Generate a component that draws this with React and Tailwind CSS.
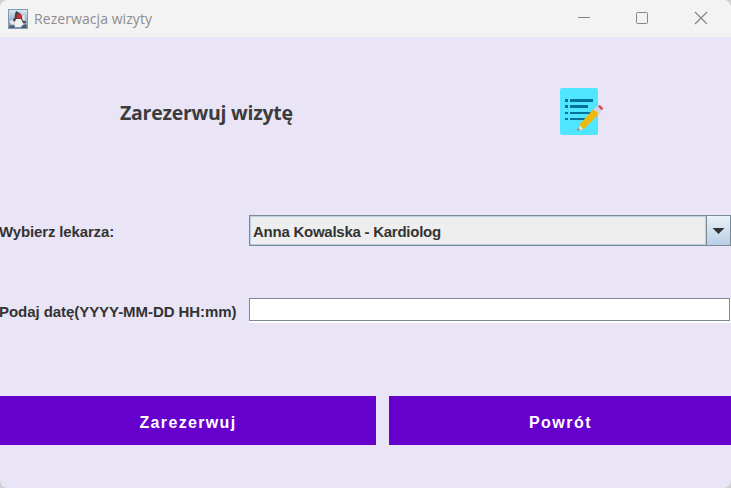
function JavaIcon() {
  return (
    <svg width="20" height="20" viewBox="0 0 20 20" className="shrink-0">
      <defs>
        <linearGradient id="sky" x1="0" y1="0" x2="0" y2="1">
          <stop offset="0" stopColor="#dce8f2" />
          <stop offset="1" stopColor="#7390b0" />
        </linearGradient>
      </defs>
      <rect x="0.5" y="0.5" width="19" height="19" fill="url(#sky)" stroke="#7f9ab5" />
      <path d="M8 2L10 3L13 5L14.5 9L17.5 12L18 14L13 14L8 13L5 15L2 14L6.5 9L7 5Z" fill="#3f4248" />
      <path d="M8 10L13 10L15 14L16 17L12 18L7 18L6 15Z" fill="#f2f2f2" />
      <path d="M1.5 12L4.5 11L7 13L6 15.5L3 15.5ZM14 8L16 6.5L17 10L16.5 12.5L14.5 11Z" fill="#e4e6e9" />
      <path d="M1.5 16.5H7L6 19H1.5ZM14.5 16L18.5 15.5V19H13Z" fill="#4f5a68" />
      <circle cx="11" cy="7.3" r="2.5" fill="#d8262a" />
    </svg>
  );
}

function NoteIcon() {
  return (
    <svg width="46" height="50" viewBox="0 0 46 50" className="mb-[2px]">
      <rect x="0" y="1" width="38" height="47" rx="2" fill="#50e6ff" />
      <g fill="#00739c">
        <rect x="5" y="12" width="3" height="3" />
        <rect x="10" y="12" width="23" height="3" />
        <rect x="5" y="18" width="3" height="3" />
        <rect x="10" y="18" width="18" height="3" />
        <rect x="5" y="25" width="3" height="2" />
        <rect x="10" y="25" width="22" height="2" />
        <rect x="5" y="31" width="3" height="2" />
        <rect x="10" y="31" width="16" height="2" />
      </g>
      <path d="M16 44L19.5 37.5L21 40Z" fill="#35cfe9" />
      <path d="M18 43.5L19.5 38L23.5 42Z" fill="#f3e2cf" />
      <path d="M19.2 38L33.5 22L39 27L23.7 42.3Z" fill="#edb90c" />
      <path d="M33.5 22.3L37 19L41.5 24L38.8 27.2Z" fill="#d5d3dc" />
      <path d="M38.5 18L40.5 18.5L43 21L42.5 23L40.5 22.5L38.5 20Z" fill="#d9475c" />
      <path d="M17.7 43.5L18.4 41.3L20 43Z" fill="#b34b43" />
    </svg>
  );
}

function TitleBar() {
  return (
    <header className="flex h-[37px] shrink-0 items-center bg-[#f3f3f3] pl-2">
      <JavaIcon />
      <span className="ml-[6px] whitespace-nowrap font-['Open_Sans',sans-serif] text-[14px] leading-5 tracking-[0.07px] text-[#8d8d8d]">
        Rezerwacja wizyty
      </span>
      <svg width="160" height="37" viewBox="0 0 160 37" className="ml-auto" fill="none" stroke="#858585">
        <path d="M7 17.5H19" />
        <rect x="65.5" y="12.5" width="11" height="11" rx="1" />
        <path d="M124 12L136 24M136 12L124 24" strokeWidth="1.2" />
      </svg>
    </header>
  );
}

export default function App() {
  return (
    <div className="h-[488px] w-[731px] bg-[#d0d0d0] font-['Liberation_Sans',sans-serif] text-[#333333]">
      <div className="flex h-full flex-col overflow-hidden rounded-lg bg-[#e9e5f6]">
        <TitleBar />
        <main className="flex flex-col">
          <section className="flex h-[152px] items-center">
            <h1 className="ml-[120px] w-[440px] whitespace-nowrap font-['Open_Sans',sans-serif] text-[19.5px] font-bold leading-7 tracking-[-0.25px] text-[#3c3c3c]">
              Zarezerwuj wizytę
            </h1>
            <NoteIcon />
          </section>
          <div className="mt-[26px] flex h-[31px] items-center">
            <label className="-ml-px w-[250px] whitespace-nowrap pt-[4px] text-[15px] font-bold tracking-[-0.14px]">Wybierz lekarza:</label>
            <button className="flex h-[31px] flex-1 border border-[#7a8a99] bg-[#eeeeee] text-left">
              <span className="flex h-full flex-1 items-center whitespace-nowrap border border-[#b8cfe5] pl-[2px] pt-[3px] text-[15px] font-bold tracking-[-0.25px]">
                Anna Kowalska - Kardiolog
              </span>
              <span className="flex h-full w-[24px] items-center justify-center border-l border-[#7a8a99] bg-linear-to-b from-[#eaf2f9] to-[#b8cfe5]">
                <svg width="13" height="6" viewBox="0 0 13 6">
                  <path d="M0.5 0H12.5L6.5 6Z" fill="#333" />
                </svg>
              </span>
            </button>
          </div>
          <div className="mt-[52px] flex h-[25px] items-center">
            <label className="-ml-px w-[250px] whitespace-nowrap pt-[4px] text-[15px] font-bold tracking-[-0.06px]">Podaj datę(YYYY-MM-DD HH:mm)</label>
            <div className="h-[25px] flex-1 bg-white">
              <input className="block h-[23px] w-[481px] border border-[#7a8a99] bg-white px-1 text-[15px] outline-none" />
            </div>
          </div>
          <div className="mt-[73px] flex h-[49px] gap-[13px] text-[16px] font-bold text-white">
            <button className="w-[376px] bg-[#6600cc] pt-[4px] tracking-[1.35px]">Zarezerwuj</button>
            <button className="flex-1 bg-[#6600cc] pt-[4px] pl-px tracking-[1.5px]">Powrót</button>
          </div>
        </main>
      </div>
    </div>
  );
}
